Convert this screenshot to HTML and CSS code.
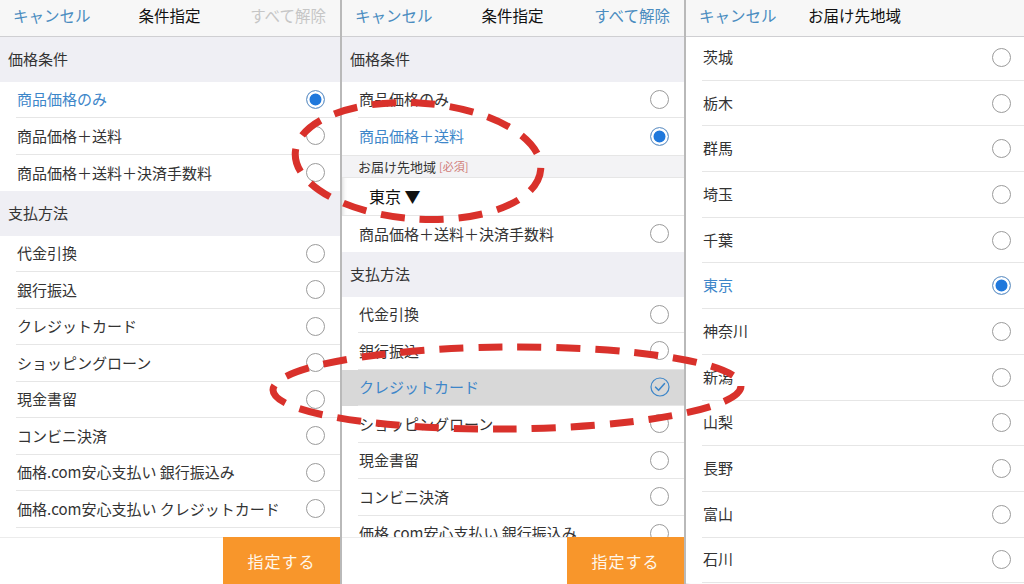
FILE: index.html
```html
<!DOCTYPE html>
<html lang="ja">
<head>
  <meta charset="UTF-8">
  <title>条件指定</title>
  <link rel="stylesheet" href="styles.css">
</head>
<body>
  <div class="screens">

    <!-- 画面1 : 条件指定 -->
    <section class="panel">
      <header class="bar">
        <span class="bar-left">キャンセル</span>
        <span class="bar-title">条件指定</span>
        <span class="bar-right off">すべて解除</span>
      </header>
      <div class="list">
        <div class="group">価格条件</div>
        <div class="row"><div class="row-in sel"><span>商品価格のみ</span><i class="radio on"></i></div></div>
        <div class="row"><div class="row-in"><span>商品価格＋送料</span><i class="radio"></i></div></div>
        <div class="row"><div class="row-in last"><span>商品価格＋送料＋決済手数料</span><i class="radio"></i></div></div>
        <div class="group">支払方法</div>
        <div class="row"><div class="row-in"><span>代金引換</span><i class="radio"></i></div></div>
        <div class="row"><div class="row-in"><span>銀行振込</span><i class="radio"></i></div></div>
        <div class="row"><div class="row-in"><span>クレジットカード</span><i class="radio"></i></div></div>
        <div class="row"><div class="row-in"><span>ショッピングローン</span><i class="radio"></i></div></div>
        <div class="row"><div class="row-in"><span>現金書留</span><i class="radio"></i></div></div>
        <div class="row"><div class="row-in"><span>コンビニ決済</span><i class="radio"></i></div></div>
        <div class="row"><div class="row-in"><span>価格.com安心支払い 銀行振込み</span><i class="radio"></i></div></div>
        <div class="row"><div class="row-in"><span>価格.com安心支払い クレジットカード</span><i class="radio"></i></div></div>
      </div>
      <footer class="foot"><button class="submit">指定する</button></footer>
    </section>

    <!-- 画面2 : 送料込み選択時 -->
    <section class="panel">
      <header class="bar">
        <span class="bar-left">キャンセル</span>
        <span class="bar-title">条件指定</span>
        <span class="bar-right">すべて解除</span>
      </header>
      <div class="list">
        <div class="group">価格条件</div>
        <div class="row"><div class="row-in"><span>商品価格のみ</span><i class="radio"></i></div></div>
        <div class="row"><div class="row-in sel nosep"><span>商品価格＋送料</span><i class="radio on"></i></div></div>
        <div class="subhead">お届け先地域 <em>[必須]</em></div>
        <div class="pick">東京 ▼</div>
        <div class="row"><div class="row-in last"><span>商品価格＋送料＋決済手数料</span><i class="radio"></i></div></div>
        <div class="group">支払方法</div>
        <div class="row"><div class="row-in"><span>代金引換</span><i class="radio"></i></div></div>
        <div class="row"><div class="row-in"><span>銀行振込</span><i class="radio"></i></div></div>
        <div class="row active"><div class="row-in sel"><span>クレジットカード</span>
          <svg class="check" width="20" height="20" viewBox="0 0 20 20"><circle cx="10" cy="10" r="9" fill="none" stroke="#3d86c9" stroke-width="1.2"/><path d="M5.6 10.2l3 3.1 5.8-6.6" fill="none" stroke="#3d86c9" stroke-width="1.6" stroke-linecap="round" stroke-linejoin="round"/></svg>
        </div></div>
        <div class="row"><div class="row-in"><span>ショッピングローン</span><i class="radio"></i></div></div>
        <div class="row"><div class="row-in"><span>現金書留</span><i class="radio"></i></div></div>
        <div class="row"><div class="row-in"><span>コンビニ決済</span><i class="radio"></i></div></div>
        <div class="row"><div class="row-in"><span>価格.com安心支払い 銀行振込み</span><i class="radio"></i></div></div>
      </div>
      <footer class="foot"><button class="submit">指定する</button></footer>
    </section>

    <!-- 画面3 : お届け先地域 -->
    <section class="panel narrow">
      <header class="bar">
        <span class="bar-left">キャンセル</span>
        <span class="bar-title">お届け先地域</span>
        <span class="bar-right"></span>
      </header>
      <div class="list pref">
        <div class="row"><div class="row-in"><span>茨城</span><i class="radio"></i></div></div>
        <div class="row"><div class="row-in"><span>栃木</span><i class="radio"></i></div></div>
        <div class="row"><div class="row-in"><span>群馬</span><i class="radio"></i></div></div>
        <div class="row"><div class="row-in"><span>埼玉</span><i class="radio"></i></div></div>
        <div class="row"><div class="row-in"><span>千葉</span><i class="radio"></i></div></div>
        <div class="row"><div class="row-in sel"><span>東京</span><i class="radio on"></i></div></div>
        <div class="row"><div class="row-in"><span>神奈川</span><i class="radio"></i></div></div>
        <div class="row"><div class="row-in"><span>新潟</span><i class="radio"></i></div></div>
        <div class="row"><div class="row-in"><span>山梨</span><i class="radio"></i></div></div>
        <div class="row"><div class="row-in"><span>長野</span><i class="radio"></i></div></div>
        <div class="row"><div class="row-in"><span>富山</span><i class="radio"></i></div></div>
        <div class="row"><div class="row-in"><span>石川</span><i class="radio"></i></div></div>
      </div>
    </section>
  </div>

  <!-- 赤い点線の囲み -->
  <svg class="marks" width="1024" height="584" viewBox="0 0 1024 584">
    <ellipse cx="418" cy="161" rx="123" ry="58" transform="rotate(4 418 161)"
             fill="none" stroke="#d9312b" stroke-width="7" stroke-dasharray="24 15"/>
    <ellipse cx="507" cy="388" rx="234" ry="41" transform="rotate(-0.5 507 388)"
             fill="none" stroke="#d9312b" stroke-width="7" stroke-dasharray="24 15"/>
  </svg>
</body>
</html>
```

FILE: styles.css
```css
* { box-sizing: border-box; margin: 0; padding: 0; }

html, body {
  width: 1024px;
  height: 584px;
  overflow: hidden;
}

body {
  font-family: "Noto Sans CJK JP", "Noto Sans", sans-serif;
  background: #b9b9b9;
  color: #333;
  line-height: 1;
  position: relative;
}

/* 3画面の並び */
.screens {
  display: flex;
  gap: 2px;
  height: 584px;
}
.panel {
  width: 340px;
  height: 584px;
  display: flex;
  flex-direction: column;
  background: #fff;
  overflow: hidden;
}
.panel + .panel {
  width: 342px;
  box-shadow: inset 4px 0 4px -3px rgba(0,0,0,0.15);
}
.panel.narrow {
  width: 338px;
}

/* ナビバー */
.bar {
  height: 37px;
  flex: none;
  display: grid;
  grid-template-columns: 1fr auto 1fr;
  align-items: center;
  padding: 0 14px 4px 13px;
  background: #f7f7f7;
  border-bottom: 1px solid #cfcfd2;
  font-size: 15.5px;
  position: relative;
  z-index: 1;
}
.bar-left { color: #4a8cc0; }
.bar-title { color: #111; }
.bar-right { color: #4a8cc0; text-align: right; }
.bar-right.off { color: #c6c6c6; }

/* リスト */
.list {
  flex: 1;
  overflow: hidden;
}
.group {
  height: 44.5px;
  display: flex;
  align-items: center;
  padding-left: 8px;
  padding-bottom: 2px;
  background: #efeff4;
  font-size: 15px;
  color: #333;
}
.row {
  padding-left: 16px;
  background: #fff;
}
.row.active {
  background: #d8d8d8;
}
.row-in {
  height: 36.5px;
  display: flex;
  align-items: center;
  justify-content: space-between;
  padding: 0 15px 1px 1px;
  border-bottom: 1px solid #e6e6e6;
  font-size: 15px;
  color: #333;
}
.row-in.last, .row-in.nosep { border-bottom: none; }
.row-in.sel { color: #3d86c9; }
.row-in .radio, .row-in .check { margin-bottom: -1px; }

.pref {
  margin-top: -2px;
}
.pref .row-in {
  height: 45.7px;
  padding: 0 13px 2px 1px;
}
.pref .row-in .radio { margin-bottom: -2px; }

/* ラジオ */
.radio {
  width: 19px;
  height: 19px;
  flex: none;
  border: 1px solid #9b9b9b;
  border-radius: 50%;
  background: #fff;
}
.radio.on {
  border-color: #7a9fc6;
  background: #1f78dc;
  box-shadow: inset 0 0 0 2.5px #fff;
}
.check { flex: none; margin-right: -0.5px; }

/* お届け先地域 */
.subhead {
  height: 23px;
  display: flex;
  align-items: center;
  padding-left: 16px;
  background: #f3f3f5;
  border-top: 1px solid #e6e6e6;
  border-bottom: 1px solid #e6e6e6;
  font-size: 13px;
  color: #333;
}
.subhead em {
  font-style: normal;
  font-size: 11px;
  color: #d07a75;
  margin-left: 3px;
}
.pick {
  height: 38px;
  display: flex;
  align-items: center;
  padding-left: 27px;
  border-bottom: 1px solid #e6e6e6;
  font-size: 16px;
  color: #111;
}

/* 下部ボタン */
.foot {
  height: 47px;
  flex: none;
  display: flex;
  justify-content: flex-end;
  background: #fff;
  border-top: 1px solid #ececec;
}
.submit {
  width: 117px;
  height: 47px;
  margin-top: -1px;
  border: none;
  background: #f8962b;
  color: #fff6ea;
  font-family: inherit;
  font-size: 16px;
  line-height: 1;
  letter-spacing: 1px;
}

/* 注記の点線 */
.marks {
  position: absolute;
  left: 0;
  top: 0;
  pointer-events: none;
}
```
